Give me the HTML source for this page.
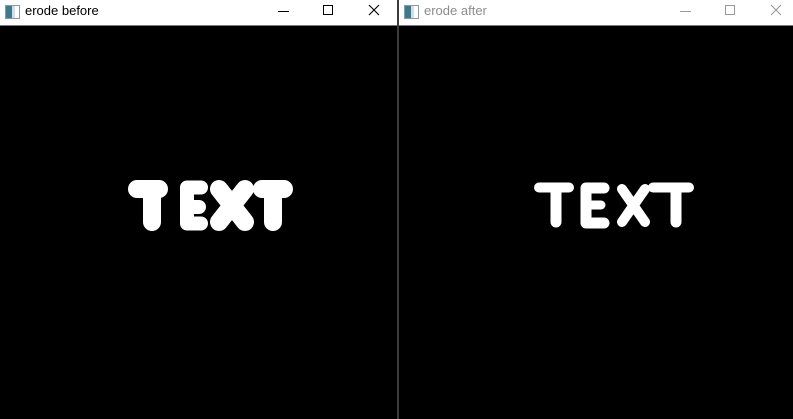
<!DOCTYPE html>
<html><head><meta charset="utf-8"><style>
html,body{margin:0;padding:0;width:793px;height:419px;overflow:hidden;background:#000;font-family:"Segoe UI","Liberation Sans","Noto Sans CJK SC",sans-serif}
.win{position:absolute;top:0;height:419px;background:#000}
.bar{position:absolute;left:0;right:0;top:0;height:25px;background:#fff;border-bottom:1px solid #7a7a7a}
.title{position:absolute;left:25px;top:3px;font-size:13px}
.ico{position:absolute;left:5px;top:5px;width:13px;height:12px;border:1px solid #8a9aa8;background:linear-gradient(90deg,#3a7a8a 0 45%,#cde 45% 70%,#fff 70%)}
</style></head><body>
<div class="win" style="left:0;width:397px">
 <div class="bar">
  <div class="ico"></div>
  <div class="title" style="color:#000">erode before</div>
  <svg width="397" height="25" style="position:absolute;left:0;top:0">
   <line x1="278" y1="11.5" x2="289" y2="11.5" stroke="#000" stroke-width="1"/>
   <rect x="323.5" y="5.5" width="9" height="9" fill="none" stroke="#000"/>
   <path d="M369 5 L379 15 M379 5 L369 15" stroke="#000" stroke-width="1.1"/>
  </svg>
 </div>
 <svg width="397" height="419" style="position:absolute;left:0;top:0">
  <g stroke="#fff" stroke-linecap="round" stroke-linejoin="round" fill="none" stroke-width="18">
   <path d="M137 189 H159 M152 189 V222"/>
   <path d="M219 189 L245 222 M245 189 L219 222"/>
   <path d="M262 189 H284 M273 189 V222"/>
  </g>
  <path d="M201 187.5 H187 V223.5 H201 M187 207 H199" stroke="#fff" stroke-width="14" stroke-linecap="round" stroke-linejoin="round" fill="none"/>
 </svg>
</div>
<div style="position:absolute;left:397px;top:0;width:2px;height:419px;background:#3c3c3c"></div>
<div class="win" style="left:399px;width:394px">
 <div class="bar">
  <div class="ico"></div>
  <div class="title" style="color:#8c8c8c">erode after</div>
  <svg width="394" height="25" style="position:absolute;left:0;top:0">
   <line x1="281" y1="11.5" x2="292" y2="11.5" stroke="#999" stroke-width="1"/>
   <rect x="326.5" y="5.5" width="9" height="9" fill="none" stroke="#999"/>
   <path d="M372 5 L382 15 M382 5 L372 15" stroke="#999" stroke-width="1.1"/>
  </svg>
 </div>
 <svg width="394" height="419" style="position:absolute;left:0;top:0">
  <g stroke="#fff" stroke-linecap="round" stroke-linejoin="round" fill="none">
   <path stroke-width="10" d="M140 187.5 H170"/>
   <path stroke-width="11" d="M157 190 V222"/>
   <path stroke-width="11" d="M205 188 H187 V223 H205"/>
   <path stroke-width="9" d="M187 205 H202"/>
   <path stroke-width="10" d="M223 189 L246 222 M246 189 L223 222"/>
   <path stroke-width="10" d="M254 187.5 H290"/>
   <path stroke-width="11" d="M277 190 V222"/>
  </g>
 </svg>
</div>
</body></html>
